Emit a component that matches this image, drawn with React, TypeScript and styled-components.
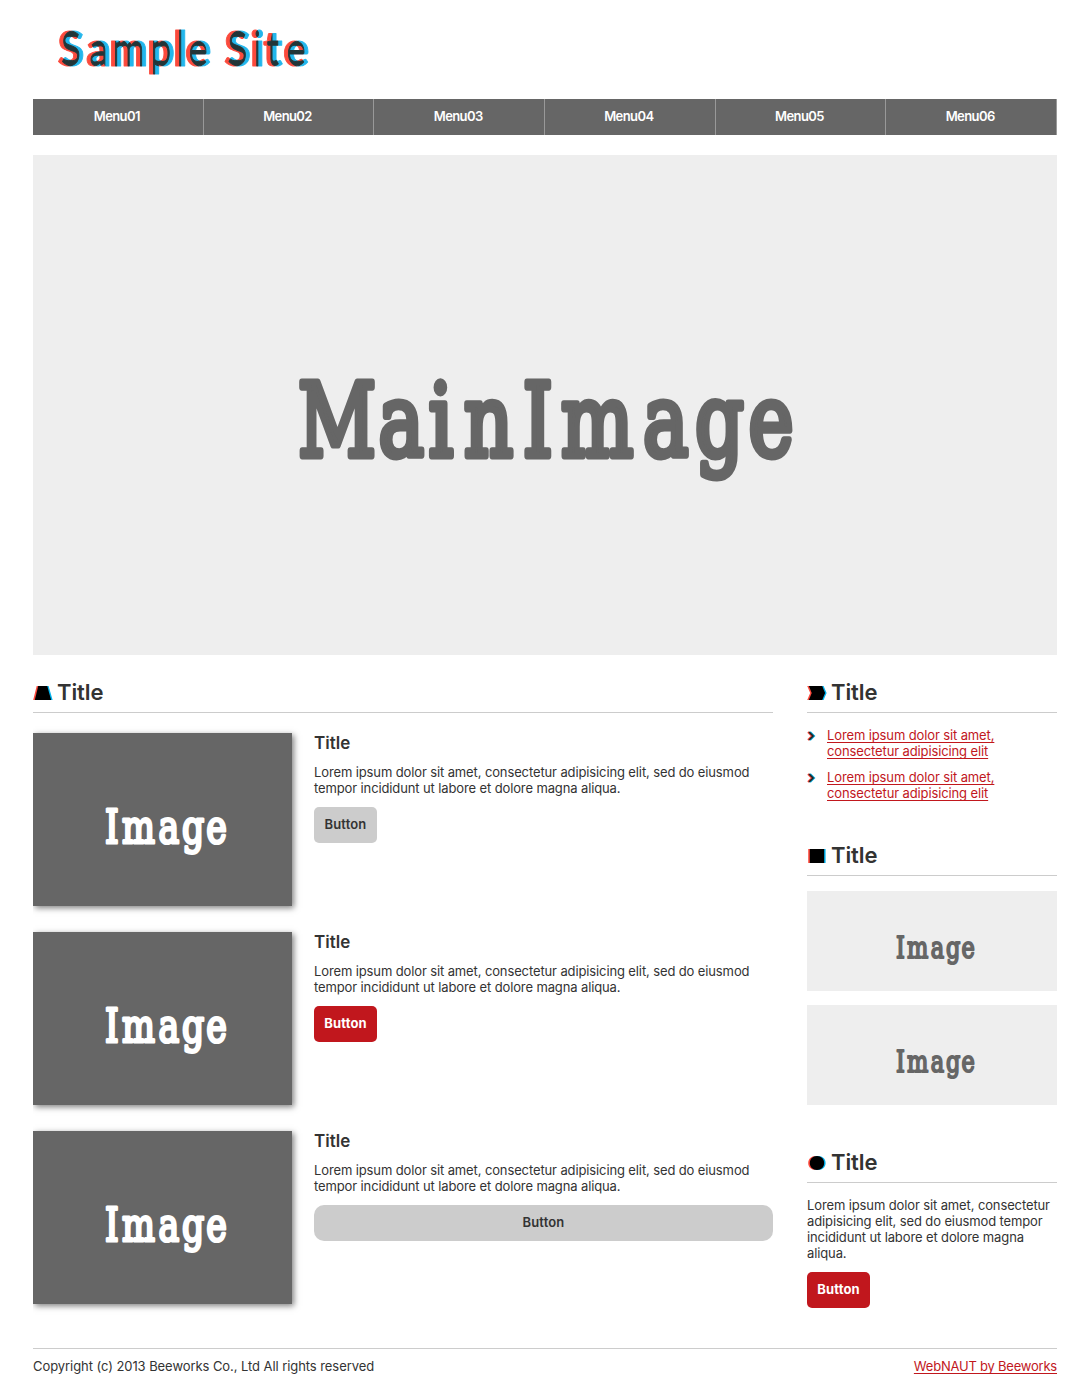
import React from "react";
import styled, { createGlobalStyle } from "styled-components";

const GlobalStyle = createGlobalStyle`
  * { box-sizing: border-box; }
  body {
    margin: 0;
    background: #fff;
    color: #333;
    font-family: Inter, "Liberation Sans", sans-serif;
    font-size: 13px;
    line-height: 16px;
  }
  h2, h3, p, ul { margin: 0; padding: 0; }
`;

const Page = styled.div`
  width: 1024px;
  height: 1385px;
  margin: 0 auto;
  overflow: hidden;
`;

const Header = styled.header`
  height: 99px;
`;

const LogoArt = styled.svg`
  display: block;
  width: 300px;
  height: 99px;
  font-family: Lato, sans-serif;
  font-size: 47.5px;
  font-weight: 700;
  stroke: #000;
  stroke-width: 1px;
  stroke-linejoin: round;
`;

const Nav = styled.nav`
  display: grid;
  grid-template-columns: repeat(6, 1fr);
  height: 36px;
  background: #666;
`;

const NavItem = styled.a`
  padding-right: 2px;
  border-right: 1px solid #999;
  color: #fff;
  font-weight: 600;
  line-height: 35px;
  text-align: center;
  letter-spacing: -0.6px;
`;

const Picture = styled.svg<{ $dark?: boolean }>`
  display: block;
  flex: none;
  background: ${(p) => (p.$dark ? "#666" : "#eee")};
  fill: ${(p) => (p.$dark ? "#fff" : "#666")};
  stroke: ${(p) => (p.$dark ? "#fff" : "#666")};
  stroke-linejoin: round;
  box-shadow: ${(p) => (p.$dark ? "2px 2px 6px rgba(0, 0, 0, 0.5)" : "none")};
  font-family: "DejaVu Serif", serif;
`;

const Hero = styled.div`
  margin-top: 20px;
`;

const Columns = styled.div`
  display: flex;
  justify-content: space-between;
  height: 693px;
  padding-top: 20px;
`;

const Main = styled.main`
  width: 740px;
`;

const Side = styled.aside`
  width: 250px;
`;

const Heading = styled.h2`
  display: flex;
  align-items: center;
  gap: 4px;
  height: 38px;
  padding-bottom: 3px;
  border-bottom: 1px solid #ccc;
  font-size: 22px;
  font-weight: 600;
  line-height: 34px;
  letter-spacing: -0.1px;
`;

const Marker = styled.svg`
  width: 20px;
  height: 14px;
  margin-top: 2px;
`;

const Entries = styled.div`
  display: flex;
  flex-direction: column;
  gap: 26px;
  margin-top: 20px;
`;

const Entry = styled.article`
  display: flex;
  gap: 22px;
  height: 173px;
`;

const EntryBody = styled.div`
  flex: 1;
`;

const EntryTitle = styled.h3`
  margin-bottom: 11px;
  font-size: 17px;
  font-weight: 600;
  line-height: 20px;
  letter-spacing: 0;
`;

const Copy = styled.p`
  letter-spacing: -0.12px;
`;

const Button = styled.button<{ $red?: boolean; $wide?: boolean }>`
  display: block;
  width: ${(p) => (p.$wide ? "100%" : "63px")};
  height: 36px;
  margin-top: 11px;
  padding: 0 0 1px;
  border: 0;
  border-radius: ${(p) => (p.$wide ? 10 : 5)}px;
  background: ${(p) => (p.$red ? "#c1171d" : "#ccc")};
  color: ${(p) => (p.$red ? "#fff" : "#333")};
  font: ${(p) => (p.$red ? 700 : 600)} 13px/35px Inter, "Liberation Sans", sans-serif;
  letter-spacing: 0.15px;
`;

const Block = styled.section<{ $gap: number }>`
  margin-bottom: ${(p) => p.$gap}px;
`;

const Links = styled.ul`
  display: flex;
  flex-direction: column;
  gap: 10px;
  padding-top: 14px;
  list-style: none;
`;

const LinkRow = styled.li`
  display: flex;
  gap: 11px;
`;

const Chevron = styled.svg`
  width: 9px;
  height: 10px;
  margin-top: 4px;
  flex: none;
`;

const Link = styled.a<{ $tight?: boolean }>`
  color: #c1171d;
  letter-spacing: ${(p) => (p.$tight ? -0.22 : -0.12)}px;
  text-decoration: underline;
  text-underline-offset: 2px;
  text-decoration-skip-ink: none;
`;

const Banners = styled.div`
  display: flex;
  flex-direction: column;
  gap: 14px;
  padding-top: 15px;
`;

const SideCopy = styled.div`
  padding-top: 14px;
`;

const Footer = styled.footer`
  display: flex;
  justify-content: space-between;
  padding-top: 9px;
  border-top: 1px solid #ccc;
  letter-spacing: -0.07px;
`;

const shapes = {
  trapezoid: "M4.5 0H14L18 14H1Z",
  arrow: "M1 0H15L18 7L15 14H1L4 7Z",
  square: "M2 0H17V14H2Z",
  circle: "M9.5 0C14 0 17 3 17 7S14 14 9.5 14S2 11 2 7S5 0 9.5 0Z",
};

function SectionHeading({ shape }: { shape: keyof typeof shapes }) {
  return (
    <Heading>
      <Marker viewBox="0 0 20 14">
        <path d={shapes[shape]} fill="#ff4a3d" transform="translate(-0.8 0)" />
        <path d={shapes[shape]} fill="#00b4f0" transform="translate(1.6 0)" />
        <path d={shapes[shape]} fill="#000" transform="translate(0.9 0) scale(.955 1)" />
      </Marker>
      Title
    </Heading>
  );
}

const STRETCH = 0.755;

// Left edge of every letter, in ems of the font size.
const letterStops: Record<string, number[]> = {
  MainImage: [0, 0.798, 1.295, 1.643, 2.226, 2.603, 3.416, 3.93, 4.46],
  Image: [0, 0.372, 1.165, 1.675, 2.2],
};

interface PlaceholderProps {
  width: number;
  height: number;
  label: string;
  x: number;
  baseline: number;
  size: number;
  dark?: boolean;
}

function Placeholder({ width, height, label, x, baseline, size, dark }: PlaceholderProps) {
  const stops = letterStops[label].map((s) => ((x + s * size) / STRETCH).toFixed(2));
  return (
    <Picture width={width} height={height} $dark={dark}>
      <text
        x={stops.join(" ")}
        y={baseline}
        fontSize={size}
        strokeWidth={size * 0.068}
        transform={`scale(${STRETCH} 1)`}
      >
        {label}
      </text>
    </Picture>
  );
}

const logoStops = [24.5, 53, 76, 114, 140, 152, 177.5, 191, 217, 230, 250]
  .map((v) => (v / 0.88).toFixed(2))
  .join(" ");

const entries = [{}, { red: true }, { wide: true }] as { red?: boolean; wide?: boolean }[];

export default function App() {
  return (
    <>
      <GlobalStyle />
      <Page>
        <Header>
          <LogoArt viewBox="0 0 300 99">
            <filter id="anaglyph" x="-5%" y="-10%" width="110%" height="120%" colorInterpolationFilters="sRGB">
              <feFlood floodColor="#fb4a3c" />
              <feComposite in2="SourceAlpha" operator="in" result="red" />
              <feOffset in="SourceAlpha" dx="4" dy="0" result="shifted" />
              <feFlood floodColor="#22b6ec" />
              <feComposite in2="shifted" operator="in" result="cyan" />
              <feBlend in="red" in2="cyan" mode="multiply" />
            </filter>
            <text x={logoStops} y="66" filter="url(#anaglyph)" transform="scale(.88 1)">
              Sample Site
            </text>
          </LogoArt>
        </Header>
        <Nav>
          {[1, 2, 3, 4, 5, 6].map((n) => (
            <NavItem key={n}>Menu0{n}</NavItem>
          ))}
        </Nav>
        <Hero>
          <Placeholder width={1024} height={500} label="MainImage" x={265} baseline={301} size={101} />
        </Hero>
        <Columns>
          <Main>
            <SectionHeading shape="trapezoid" />
            <Entries>
              {entries.map((e, i) => (
                <Entry key={i}>
                  <Placeholder width={259} height={173} label="Image" x={72} baseline={109.7} size={46} dark />
                  <EntryBody>
                    <EntryTitle>Title</EntryTitle>
                    <Copy>
                      Lorem ipsum dolor sit amet, consectetur adipisicing elit, sed do eiusmod
                      <br />
                      tempor incididunt ut labore et dolore magna aliqua.
                    </Copy>
                    <Button $red={e.red} $wide={e.wide}>Button</Button>
                  </EntryBody>
                </Entry>
              ))}
            </Entries>
          </Main>
          <Side>
            <Block $gap={37}>
              <SectionHeading shape="arrow" />
              <Links>
                {[0, 1].map((i) => (
                  <LinkRow key={i}>
                    <Chevron viewBox="0 0 9 10">
                      <path d="M1 1L5 5L1 9" fill="none" stroke="#ff4a3d" strokeWidth="2" />
                      <path d="M3 1L7 5L3 9" fill="none" stroke="#00a4d8" strokeWidth="2" />
                      <path d="M2 1L6 5L2 9" fill="none" stroke="#222" strokeWidth="1.6" />
                    </Chevron>
                    <Link>
                      Lorem ipsum dolor sit amet,
                      <br />
                      consectetur adipisicing elit
                    </Link>
                  </LinkRow>
                ))}
              </Links>
            </Block>
            <Block $gap={40}>
              <SectionHeading shape="square" />
              <Banners>
                {[0, 1].map((i) => (
                  <Placeholder key={i} width={250} height={100} label="Image" x={89} baseline={67} size={29.8} />
                ))}
              </Banners>
            </Block>
            <Block $gap={0}>
              <SectionHeading shape="circle" />
              <SideCopy>
                <Copy>
                  Lorem ipsum dolor sit amet, consectetur
                  <br />
                  adipisicing elit, sed do eiusmod tempor
                  <br />
                  incididunt ut labore et dolore magna
                  <br />
                  aliqua.
                </Copy>
                <Button $red>Button</Button>
              </SideCopy>
            </Block>
          </Side>
        </Columns>
        <Footer>
          <span>Copyright (c) 2013 Beeworks Co., Ltd All rights reserved</span>
          <Link $tight>WebNAUT by Beeworks</Link>
        </Footer>
      </Page>
    </>
  );
}
